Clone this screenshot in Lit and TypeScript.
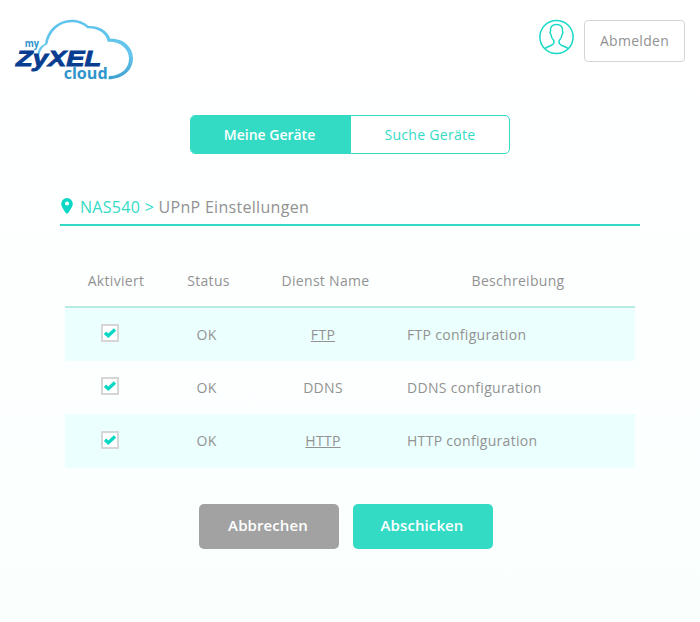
import { LitElement, html, css, nothing } from "lit";
import { customElement } from "lit/decorators.js";
import { classMap } from "lit/directives/class-map.js";

interface Service {
  name: string;
  link: boolean;
  description: string;
}

const SERVICES: Service[] = [
  { name: "FTP", link: true, description: "FTP configuration" },
  { name: "DDNS", link: false, description: "DDNS configuration" },
  { name: "HTTP", link: true, description: "HTTP configuration" },
];

@customElement("cloud-logo")
class CloudLogo extends LitElement {
  static styles = css`
    :host { display: block; width: 150px; height: 80px; letter-spacing: 0; }
    svg { display: block; }
    text { font-family: "Open Sans", sans-serif; font-weight: 700; }
    .brand { font-family: "Liberation Sans", sans-serif; font-style: italic; font-size: 68px; fill: #073d91; stroke: #073d91; stroke-width: 2.5px; }
    .my { font-size: 29px; fill: #2f93cc; }
    .cloud { font-size: 46px; fill: #2f93cc; }
  `;
  render() {
    return html`<svg width="150" height="80" viewBox="0 0 450 240">
      <defs>
        <linearGradient id="sky" x1="0" y1="0" x2="0" y2="1">
          <stop offset="0" stop-color="#5ec4ee" />
          <stop offset="0.6" stop-color="#66c6ec" />
          <stop offset="1" stop-color="#3d9fd2" />
        </linearGradient>
      </defs>
      <path
        fill="url(#sky)"
        d="M112 132C114 118 122 106 135 101C141 60 172 30 215 29C237 29 254 37 266 48C296 46 323 62 331 86C370 84 399 111 399 145C399 181 368 208 325 208L327 198C363 197 387 175 387 146C387 116 361 93 323 95C319 71 296 54 262 55C249 42 233 37 214 37C178 37 150 64 142 103C130 108 122 117 119 133Z"
      />
      <text class="my" x="74" y="111" textLength="43" lengthAdjust="spacingAndGlyphs">my</text>
      <text class="brand" x="48" y="167" textLength="256" lengthAdjust="spacingAndGlyphs">ZyXEL</text>
      <text class="cloud" x="191" y="207" textLength="132" lengthAdjust="spacingAndGlyphs">cloud</text>
    </svg>`;
  }
}

@customElement("check-box")
class CheckBox extends LitElement {
  static styles = css`
    :host { display: block; box-sizing: border-box; width: 18px; height: 18px; border: 2px solid #d6d6d6; background: #fff; }
    svg { display: block; }
  `;
  render() {
    return html`<svg width="14" height="14" viewBox="0 0 14 14">
      <path d="M2 6.7L5.3 9.7L12 3.6" fill="none" stroke="#0bd8c4" stroke-width="3.4" />
    </svg>`;
  }
}

@customElement("app-root")
class AppRoot extends LitElement {
  static styles = css`
    :host {
      display: block;
      box-sizing: border-box;
      height: 622px;
      overflow: hidden;
      background: linear-gradient(#ffffff, #fdffff 50%, #fafffe);
      font: 14px/20px "Open Sans", sans-serif;
      letter-spacing: 0.3px;
      color: #929292;
    }
    header { display: flex; align-items: flex-start; height: 115px; box-sizing: border-box; padding: 10px 15px 0 0; }
    cloud-logo { flex: none; }
    .avatar { margin: 9px 10px 0 auto; }
    .logout { box-sizing: border-box; width: 101px; height: 42px; margin-top: 10px; border: 1px solid #d5d5d5; border-radius: 4px; background: #fff; line-height: 40px; text-align: center; }
    .tabs { display: flex; box-sizing: border-box; width: 320px; height: 39px; margin: 0 auto; border: 1px solid #33dbc5; border-radius: 5px; overflow: hidden; background: #fff; color: #33dbc5; line-height: 38px; text-align: center; }
    .tab { flex: 1; }
    .active { box-sizing: border-box; flex: 0 0 160px; padding-right: 3px; background: #33dbc5; color: #fff; font-weight: 600; letter-spacing: 0; }
    .crumbs { display: flex; align-items: center; box-sizing: border-box; width: 580px; height: 37px; margin: 35px auto 0; border-bottom: 2px solid #33dbc5; font-size: 16px; white-space: pre; }
    .crumbs svg { margin: 0 7px 1px 1px; }
    .device { color: #33dbc5; }
    .table { width: 570px; margin: 28px auto 0; }
    .row { display: grid; grid-template-columns: 102px 83px 151px 234px; align-items: center; height: 53px; justify-items: center; }
    .row:last-child { height: 54px; }
    .head { height: 54px; box-sizing: border-box; padding-top: 2px; border-bottom: 2px solid #b5ebe3; }
    .tinted { background: #ebfffe; }
    .check { padding: 0 12px 3px 0; }
    .status { padding-right: 4px; }
    .name { padding-right: 5px; }
    .link { text-decoration: underline; }
    .description { justify-self: start; padding-left: 6px; }
    .actions { display: flex; justify-content: center; gap: 14px; margin: 36px 8px 0 0; }
    .button { box-sizing: border-box; width: 140px; height: 45px; padding-right: 2px; border-radius: 5px; background: #a2a2a2; color: #fff; font-size: 15px; font-weight: 600; letter-spacing: 0.1px; line-height: 43px; text-align: center; }
    .submit { background: #33dbc5; }
  `;
  render() {
    return html`
      <header>
        <cloud-logo></cloud-logo>
        <svg class="avatar" width="36" height="36" viewBox="-0.5 0 36 36" fill="none" stroke="#18d9c5" stroke-width="1.5">
          <circle cx="18" cy="18" r="16.6" />
          <path d="M6.3 29.7C9 27 15.4 27 15.4 23.6V21.6C13.5 20 12.8 18 12.4 15.5C11.4 14.5 11.5 13 12 12.2C11.5 7.8 13.5 5.4 18 5.4S24.5 7.8 24 12.2C24.5 13 24.6 14.5 23.6 15.5C23.2 18 22.5 20 20.6 21.6V23.6C20.6 27 27 27 29.7 29.7" />
        </svg>
        <div class="logout">Abmelden</div>
      </header>
      <nav class="tabs">
        <div class="tab active">Meine Geräte</div>
        <div class="tab">Suche Geräte</div>
      </nav>
      <div class="crumbs"><svg width="12" height="16" viewBox="0 0 12 16">
          <path fill="#0bd8c4" fill-rule="evenodd" d="M6 0A5.8 5.8 0 0 0 .2 5.8C.2 8.5 3.2 12.8 4.8 15Q6 16.2 7.2 15C8.8 12.8 11.8 8.5 11.8 5.8A5.8 5.8 0 0 0 6 0ZM6 3.4A2.1 2.1 0 1 1 6 7.6A2.1 2.1 0 1 1 6 3.4Z" />
        </svg><span class="device">NAS540 &gt; </span><span>UPnP Einstellungen</span></div>
      <div class="table">
        <div class="row head"><span>Aktiviert</span><span>Status</span><span>Dienst Name</span><span>Beschreibung</span></div>
        ${SERVICES.map(
          (s, i) => html`<div class=${classMap({ row: true, tinted: i % 2 === 0 })}>
            <div class="check"><check-box></check-box></div>
            <span class="status">OK</span>
            <div class="name"><span class=${s.link ? "link" : nothing}>${s.name}</span></div>
            <span class="description">${s.description}</span>
          </div>`
        )}
      </div>
      <div class="actions">
        <div class="button">Abbrechen</div>
        <div class="button submit">Abschicken</div>
      </div>
    `;
  }
}
